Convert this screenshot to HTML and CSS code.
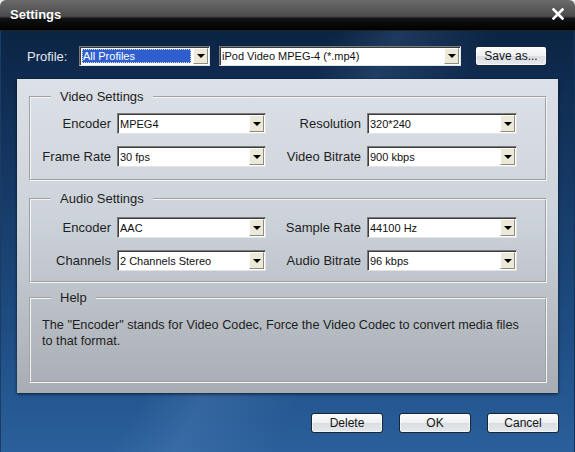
FILE: index.html
```html
<!DOCTYPE html>
<html lang="en">

    <head>
        <meta charset="UTF-8">
        <title>Settings</title>
        <link rel="stylesheet" href="styles.css">
    </head>

    <body>
        <div class="window">
            <div class="titlebar">
                <span class="title">Settings</span>
                <svg class="close" width="12" height="12" viewBox="0 0 12 12">
                    <path d="M1.5 1.5 L10.5 10.5 M10.5 1.5 L1.5 10.5" stroke="#fff" stroke-width="2.6" stroke-linecap="square" />
                </svg>
            </div>

            <div class="content">
                <div class="profile-row">
                    <span class="profile-label">Profile:</span>
                    <div class="combo combo-small profile-cat">
                        <span class="combo-text"><span class="selected">All Profiles</span></span>
                        <span class="combo-btn"></span>
                    </div>
                    <div class="combo combo-small profile-name">
                        <span class="combo-text">iPod Video MPEG-4 (*.mp4)</span>
                        <span class="combo-btn"></span>
                    </div>
                    <button class="btn save-btn">Save as...</button>
                </div>

                <div class="panel">
                    <fieldset class="group">
                        <legend>Video Settings</legend>
                        <div class="grid">
                            <label>Encoder</label>
                            <div class="combo"><span class="combo-text">MPEG4</span><span class="combo-btn"></span></div>
                            <label>Resolution</label>
                            <div class="combo"><span class="combo-text">320*240</span><span class="combo-btn"></span></div>

                            <label>Frame Rate</label>
                            <div class="combo"><span class="combo-text">30 fps</span><span class="combo-btn"></span></div>
                            <label>Video Bitrate</label>
                            <div class="combo"><span class="combo-text">900 kbps</span><span class="combo-btn"></span></div>
                        </div>
                    </fieldset>

                    <fieldset class="group audio">
                        <legend>Audio Settings</legend>
                        <div class="grid">
                            <label>Encoder</label>
                            <div class="combo"><span class="combo-text">AAC</span><span class="combo-btn"></span></div>
                            <label>Sample Rate</label>
                            <div class="combo"><span class="combo-text">44100 Hz</span><span class="combo-btn"></span></div>

                            <label>Channels</label>
                            <div class="combo"><span class="combo-text">2 Channels Stereo</span><span class="combo-btn"></span></div>
                            <label>Audio Bitrate</label>
                            <div class="combo"><span class="combo-text">96 kbps</span><span class="combo-btn"></span></div>
                        </div>
                    </fieldset>

                    <fieldset class="group help">
                        <legend>Help</legend>
                        <p class="help-text">The "Encoder" stands for Video Codec, Force the Video Codec to convert media files<br>to that format.</p>
                    </fieldset>
                </div>

                <div class="footer">
                    <button class="btn">Delete</button>
                    <button class="btn">OK</button>
                    <button class="btn">Cancel</button>
                </div>
            </div>
        </div>
    </body>

</html>
```

FILE: styles.css
```css
body {
    margin: 0;
    background: #e8ecf0;
    font-family: "Liberation Sans", Arial, sans-serif;
}

.window {
    width: 575px;
    height: 452px;
    display: flex;
    flex-direction: column;
    border-radius: 6px 6px 0 0;
    overflow: hidden;
}

/* barra de titulo */
.titlebar {
    height: 31px;
    flex: none;
    display: flex;
    align-items: center;
    justify-content: space-between;
    padding: 0 11px 0 10px;
    box-sizing: border-box;
    background: linear-gradient(to bottom, #6a6a6a 0%, #4c4c4c 52%, #121212 60%, #000 96%, #3a3a3a 100%);
}

.title {
    color: #fff;
    font-size: 13px;
    font-weight: bold;
    margin-top: -2px;
    text-shadow: 0 1px 1px rgba(0, 0, 0, 0.6);
}

.close {
    margin-top: -4px;
}

.content {
    flex: 1;
    display: flex;
    flex-direction: column;
    border-left: 1px solid #1b3c63;
    border-right: 1px solid #12345a;
    background:
        linear-gradient(118deg, rgba(255, 255, 255, 0) 42%, rgba(140, 180, 230, 0.14) 50%, rgba(255, 255, 255, 0) 62%),
        linear-gradient(to bottom, #0b2444 0%, #112f55 18%, #1e4c82 70%, #2a609c 100%);
}

.profile-row {
    display: flex;
    align-items: center;
    height: 20px;
    margin-top: 15px;
    padding-left: 26px;
}

.profile-label {
    color: #e3e9f0;
    font-size: 13px;
    width: 52px;
}

.profile-cat {
    width: 131px;
}

.profile-name {
    width: 242px;
    margin-left: 9px;
}

.save-btn {
    width: 72px;
    height: 20px;
    margin-left: 14px;
}

/* panel gris */
.panel {
    height: 314px;
    margin: 13px 16px 0 16px;
    padding: 10px 11px 10px 12px;
    box-sizing: border-box;
    display: flex;
    flex-direction: column;
    gap: 10px;
    background: linear-gradient(to bottom, #dce1e7 0%, #ccd2d9 45%, #a8adb4 100%);
    box-shadow: 0 1px 3px rgba(0, 0, 0, 0.7);
}

.group {
    margin: 0;
    padding: 0 0 12px 0;
    min-width: 0;
    border: 2px groove #f2f4f7;
}

.group legend {
    font-size: 13px;
    line-height: 15px;
    color: #1e1e1e;
    padding: 0 9px;
    margin-left: 20px;
}

.grid {
    display: grid;
    grid-template-columns: 80px 149px 89px 150px;
    grid-auto-rows: 21px;
    column-gap: 6px;
    row-gap: 12px;
    margin-top: 9px;
}

/* el bloque de audio baja un poco */
.audio .grid {
    margin-top: 11px;
    row-gap: 12px;
}

.audio {
    padding-bottom: 10px;
}

.grid label {
    font-size: 13px;
    color: #1e1e1e;
    text-align: right;
    align-self: center;
    white-space: nowrap;
}

.help {
    flex: 1;
    margin-top: -3px;
}

.help-text {
    margin: 12px 0 0 11px;
    font-size: 12.7px;
    line-height: 16px;
    color: #1e1e1e;
}

/* combos */
.combo {
    display: flex;
    align-items: center;
    height: 21px;
    box-sizing: border-box;
    background: #fff;
    border: 1px solid;
    border-color: #7b7b7b #e4e4e4 #e4e4e4 #7b7b7b;
    box-shadow: inset 1px 1px 0 #3c3c3c;
    padding: 1px 1px 1px 2px;
}

.combo-small {
    height: 20px;
}

.combo-text {
    flex: 1;
    font-size: 11px;
    color: #111;
    white-space: nowrap;
    overflow: hidden;
}

.combo-btn {
    width: 15px;
    height: 100%;
    box-sizing: border-box;
    background: #ece9d8;
    border: 1px solid;
    border-color: #fff #8e8c82 #8e8c82 #fff;
    display: flex;
    align-items: center;
    justify-content: center;
}

.combo-btn::after {
    content: "";
    border-left: 4px solid transparent;
    border-right: 4px solid transparent;
    border-top: 4px solid #000;
}

.selected {
    display: block;
    background: #2f5fcf;
    color: #fff;
    outline: 1px dotted #c8d4f0;
    outline-offset: -1px;
    padding: 1px 0 1px 1px;
    margin-right: 2px;
}

/* botones */
.btn {
    font-family: "Liberation Sans", Arial, sans-serif;
    font-size: 12px;
    color: #151515;
    padding: 0;
    border: 1px solid #1a2636;
    border-radius: 3px;
    background: linear-gradient(to bottom, #fcfcfd 0%, #eef0f2 48%, #dadee3 52%, #e5e8ec 100%);
    box-shadow: inset 0 0 0 1px rgba(255, 255, 255, 0.6);
}

.footer {
    display: flex;
    justify-content: flex-end;
    gap: 16px;
    margin-top: 20px;
    padding-right: 15px;
}

.footer .btn {
    width: 72px;
    height: 20px;
}
```
